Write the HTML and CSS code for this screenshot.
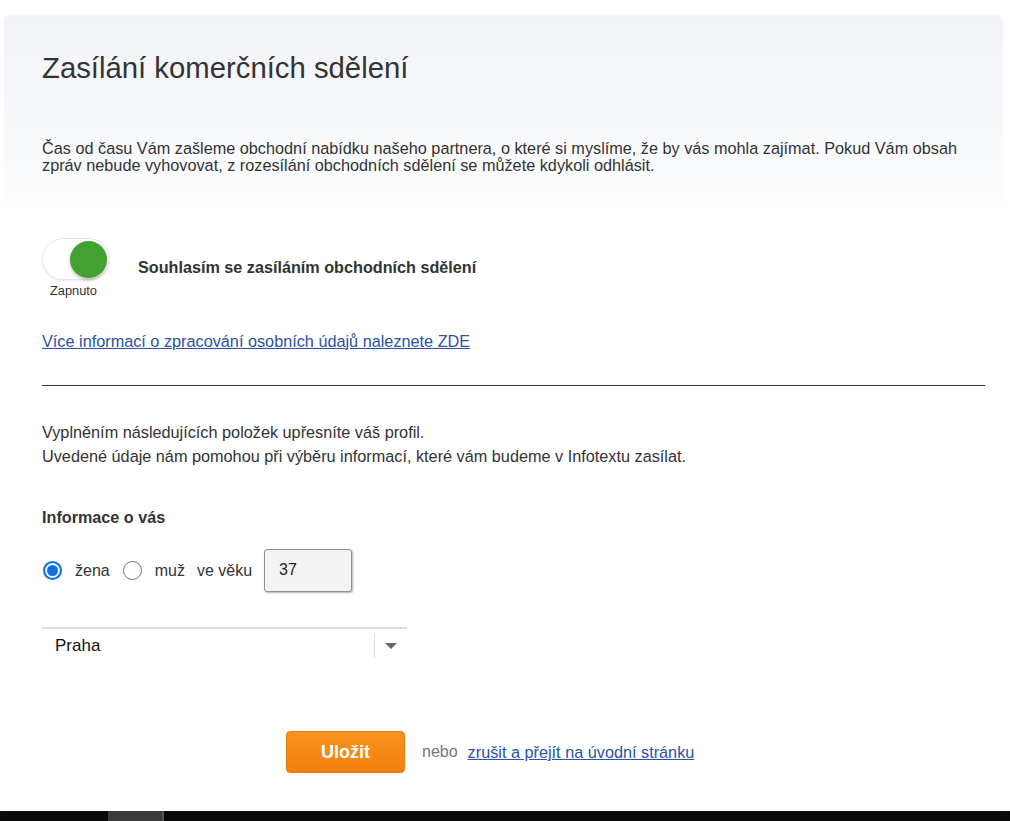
FILE: index.html
```html
<!DOCTYPE html>
<html lang="cs">

<head>
    <meta charset="UTF-8">
    <meta name="viewport" content="width=device-width, initial-scale=1.0">
    <title>Zasílání komerčních sdělení</title>
    <link rel="stylesheet" href="styles.css">
</head>

<body>
    <div class="card">
        <div class="card-head">
            <h1 class="title">Zasílání komerčních sdělení</h1>
            <p class="intro">Čas od času Vám zašleme obchodní nabídku našeho partnera, o které si myslíme, že by vás mohla zajímat. Pokud Vám obsah zpráv nebude vyhovovat, z rozesílání obchodních sdělení se můžete kdykoli odhlásit.</p>
        </div>
        <div class="card-body">
            <div class="consent">
                <div class="switch-box">
                    <div class="switch">
                        <div class="switch-knob"></div>
                    </div>
                    <div class="switch-label">Zapnuto</div>
                </div>
                <div class="consent-text">Souhlasím se zasíláním obchodních sdělení</div>
            </div>
            <a class="link info-link" href="#">Více informací o zpracování osobních údajů naleznete ZDE</a>
            <hr class="divider">
            <p class="profile-text">Vyplněním následujících položek upřesníte váš profil.<br>Uvedené údaje nám pomohou při výběru informací, které vám budeme v Infotextu zasílat.</p>
            <h2 class="section-title">Informace o vás</h2>
            <div class="about-row">
                <label class="radio"><span class="radio-dot checked"></span>žena</label>
                <label class="radio"><span class="radio-dot"></span>muž</label>
                <span class="age-label">ve věku</span>
                <div class="age-input">37</div>
            </div>
            <div class="select">
                <span class="select-value">Praha</span>
                <span class="select-sep"></span>
                <span class="select-arrow"></span>
            </div>
            <div class="actions">
                <button class="btn-save">Uložit</button>
                <span class="or">nebo</span>
                <a class="link" href="#">zrušit a přejít na úvodní stránku</a>
            </div>
        </div>
    </div>
    <div class="bottom-bar">
        <div class="bar-tab"></div>
    </div>
</body>

</html>
```

FILE: styles.css
```css
* {
    margin: 0;
    padding: 0;
    box-sizing: border-box;
}

body {
    font-family: "Liberation Sans", Arial, sans-serif;
    color: #333;
    background-color: #fff;
}

.card {
    margin: 16px 7px 0 4px;
    height: 795px;
    border-radius: 5px 5px 0 0;
    background: linear-gradient(to bottom, #f1f3f7 0, #fbfcfd 170px, #fff 195px);
    box-shadow: 0 -1px 2px rgba(0, 0, 0, 0.04);
}

.card-head {
    padding: 36px 38px 0 38px;
}

.title {
    font-size: 29.3px;
    font-weight: normal;
    color: #333;
    line-height: 32px;
}

.intro {
    margin-top: 56px;
    font-size: 16.25px;
    line-height: 17px;
    color: #333;
}

.card-body {
    padding: 0 18px 0 38px;
}

.consent {
    margin-top: 64px;
    display: flex;
    align-items: flex-start;
}

.switch-box {
    width: 68px;
    display: flex;
    flex-direction: column;
    align-items: center;
}

.switch {
    width: 68px;
    height: 42px;
    border-radius: 21px;
    background-color: #fff;
    border: 1px solid #e6e6e6;
    box-shadow: 0 1px 2px rgba(0, 0, 0, 0.08);
    display: flex;
    align-items: center;
    justify-content: flex-end;
    padding-right: 2px;
}

.switch-knob {
    width: 37px;
    height: 37px;
    border-radius: 50%;
    background-color: #43a131;
    box-shadow: 0 2px 3px rgba(0, 0, 0, 0.25);
}

.switch-label {
    margin-top: 3px;
    margin-right: 5px;
    font-size: 12.8px;
    line-height: 15px;
    color: #333;
}

.consent-text {
    margin-left: 28px;
    margin-top: 20px;
    font-size: 16.2px;
    line-height: 18px;
    font-weight: bold;
    color: #333;
}

.link {
    color: #2b52a3;
    text-decoration: underline;
    font-size: 16.25px;
    line-height: 18px;
}

.info-link {
    display: inline-block;
    margin-top: 34px;
}

.divider {
    margin-top: 34px;
    border: none;
    border-top: 1px solid #333;
}

.profile-text {
    margin-top: 34px;
    font-size: 16.25px;
    line-height: 24px;
    color: #333;
}

.section-title {
    margin-top: 40px;
    font-size: 16.2px;
    line-height: 18px;
    font-weight: bold;
    color: #333;
}

.about-row {
    margin-top: 23px;
    display: flex;
    align-items: center;
    font-size: 16px;
}

.radio {
    display: flex;
    align-items: center;
    margin-right: 12px;
}

.radio-dot {
    width: 19px;
    height: 19px;
    border-radius: 50%;
    border: 1px solid #767676;
    background-color: #fff;
    margin-right: 13px;
    margin-left: 1px;
}

.radio-dot.checked {
    border: 2px solid #0f6ee8;
    box-shadow: inset 0 0 0 2px #fff, inset 0 0 0 10px #0f6ee8;
}

.age-input {
    margin-left: 12px;
    width: 88px;
    height: 43px;
    border: 1px solid #8f8f8f;
    border-radius: 3px;
    background-color: #f3f3f3;
    box-shadow: 1px 1px 2px rgba(0, 0, 0, 0.3);
    padding: 11px 0 0 14px;
    font-size: 16px;
    color: #222;
}

.select {
    margin-top: 35px;
    width: 365px;
    height: 40px;
    padding-bottom: 4px;
    border-top: 2px solid #dcdcdc;
    display: flex;
    align-items: center;
}

.select-value {
    flex: 1;
    padding-left: 13px;
    font-size: 17px;
    color: #111;
}

.select-sep {
    width: 1px;
    height: 24px;
    background-color: #ddd;
}

.select-arrow {
    margin: 0 10px 0 10px;
    width: 0;
    height: 0;
    border-left: 6px solid transparent;
    border-right: 6px solid transparent;
    border-top: 6px solid #666;
}

.actions {
    margin-top: 64px;
    display: flex;
    align-items: center;
    padding-left: 244px;
}

.btn-save {
    width: 119px;
    height: 42px;
    border: 1px solid #e57b0d;
    border-radius: 4px;
    background: linear-gradient(to bottom, #f9941f, #f2800d);
    color: #fff;
    font-family: "Liberation Sans", Arial, sans-serif;
    font-size: 18px;
    font-weight: bold;
}

.or {
    margin-left: 17px;
    margin-right: 10px;
    font-size: 16px;
    color: #777;
}

.bottom-bar {
    height: 10px;
    background-color: #0a0a0a;
    padding-left: 108px;
}

.bar-tab {
    width: 56px;
    height: 10px;
    background-color: #3a3a3a;
    border-right: 2px solid #555;
}
```
